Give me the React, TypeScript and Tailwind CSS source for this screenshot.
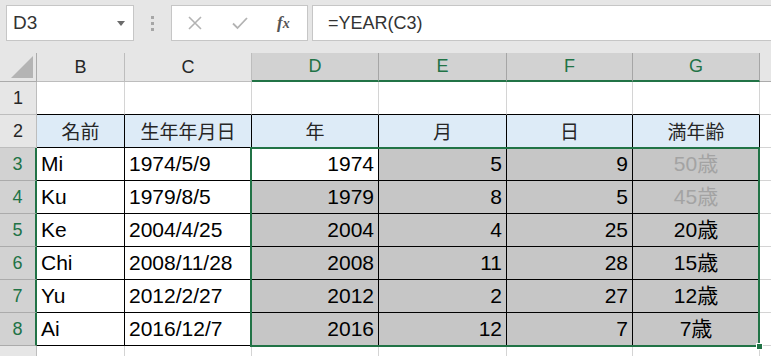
import React from 'react'

const FONT = { fontFamily: '"Liberation Sans", "Noto Sans CJK JP", sans-serif' }
const JP = { fontFamily: '"Noto Sans CJK JP", "Liberation Sans", sans-serif' }

const HEADERS = ['名前', '生年年月日', '年', '月', '日', '満年齢']

const ROWS = [
  { n: 3, name: 'Mi', date: '1974/5/9', y: '1974', m: '5', d: '9', age: '50歳', dim: true },
  { n: 4, name: 'Ku', date: '1979/8/5', y: '1979', m: '8', d: '5', age: '45歳', dim: true },
  { n: 5, name: 'Ke', date: '2004/4/25', y: '2004', m: '4', d: '25', age: '20歳' },
  { n: 6, name: 'Chi', date: '2008/11/28', y: '2008', m: '11', d: '28', age: '15歳' },
  { n: 7, name: 'Yu', date: '2012/2/27', y: '2012', m: '2', d: '27', age: '12歳' },
  { n: 8, name: 'Ai', date: '2016/12/7', y: '2016', m: '12', d: '7', age: '7歳' },
]

function TopBar() {
  return (
    <div className="h-[53px] bg-[#e6e6e6] flex items-start pt-[5px] pl-[6px]">
      {/* Name box */}
      <div className="w-[128px] h-[36px] bg-white border border-[#c6c6c6] flex items-center justify-between pl-[6px] pr-[8px]">
        <span className="text-[19px] text-[#333]">D3</span>
        <svg width="8" height="5" viewBox="0 0 8 5">
          <path d="M0 0h8L4 5z" fill="#6b6b6b" />
        </svg>
      </div>
      {/* Grip dots */}
      <div className="w-[37px] h-[36px] flex flex-col items-center justify-center gap-[3px]">
        <span className="w-[3px] h-[3px] bg-[#a6a6a6]" />
        <span className="w-[3px] h-[3px] bg-[#a6a6a6]" />
        <span className="w-[3px] h-[3px] bg-[#a6a6a6]" />
      </div>
      {/* Cancel / Enter / fx */}
      <div className="w-[137px] h-[36px] bg-white border border-[#c6c6c6] flex items-center">
        <svg className="ml-[16px]" width="14" height="14" viewBox="0 0 14 14">
          <path d="M1 1l12 12M13 1L1 13" stroke="#b3b3b3" strokeWidth="1.6" />
        </svg>
        <svg className="ml-[30px]" width="16" height="14" viewBox="0 0 16 14">
          <path d="M1 7.5l4.5 4.5L15 2" stroke="#b3b3b3" strokeWidth="1.8" fill="none" />
        </svg>
        <span
          className="ml-[29px] text-[17px] italic font-bold text-[#555]"
          style={{ fontFamily: '"Liberation Serif", serif' }}
        >
          f<span className="text-[14px]">x</span>
        </span>
      </div>
      {/* Formula input */}
      <div className="ml-[4px] flex-1 h-[36px] bg-white border border-[#c6c6c6] border-r-0 flex items-center pl-[15px]">
        <span className="text-[18px] text-[#333]">=YEAR(C3)</span>
      </div>
    </div>
  )
}

export default function App() {
  const cell = 'flex items-center border-r border-b border-black'
  return (
    <div className="w-[771px] h-[356px] overflow-hidden bg-white text-black" style={FONT}>
      <TopBar />

      <div className="relative grid grid-cols-[37px_88px_127px_127px_128px_126px_127px_1fr] grid-rows-[29px_repeat(8,33px)_1fr] h-[303px]">
        {/* Column headers */}
        <div className="bg-[#e6e6e6] border-r border-b border-[#ababab] flex items-end justify-end pr-[3px] pb-[3px]">
          <svg width="22" height="22" viewBox="0 0 22 22">
            <path d="M22 0V22H0z" fill="#b4b4b4" />
          </svg>
        </div>
        {['B', 'C'].map(c => (
          <div key={c} className="bg-[#e6e6e6] border-r border-b border-[#bdbdbd] flex items-center justify-center text-[18px] text-[#262626]">
            {c}
          </div>
        ))}
        {['D', 'E', 'F', 'G'].map(c => (
          <div key={c} className="bg-[#d2d2d2] border-r border-r-[#a6a6a6] border-b-2 border-b-[#217346] flex items-center justify-center text-[18px] text-[#217346]">
            {c}
          </div>
        ))}
        <div className="bg-[#e6e6e6] border-b border-[#ababab]" />

        {/* Row 1 */}
        <div className="bg-[#e6e6e6] border-r border-b border-[#bdbdbd] flex items-center justify-center text-[18px] text-[#262626]">1</div>
        {[0, 1, 2, 3, 4, 5].map(i => (
          <div key={i} className="border-r border-r-[#d4d4d4] border-b border-b-black" />
        ))}
        <div className="border-b border-[#d4d4d4]" />

        {/* Row 2 */}
        <div className="bg-[#e6e6e6] border-r border-b border-[#bdbdbd] flex items-center justify-center text-[18px] text-[#262626]">2</div>
        {HEADERS.map(h => (
          <div key={h} className={`${cell} justify-center bg-[#ddebf7] text-[19px] text-[#262626]`} style={JP}>
            {h}
          </div>
        ))}
        <div className="border-b border-[#d4d4d4]" />

        {/* Rows 3-8 */}
        {ROWS.map((r, i) => (
          <React.Fragment key={r.n}>
            <div className="bg-[#d2d2d2] border-r-2 border-r-[#217346] border-b border-b-[#ababab] flex items-center justify-center text-[18px] text-[#217346]">
              {r.n}
            </div>
            <div className={`${cell} pl-[4px] text-[21px]`}>{r.name}</div>
            <div className={`${cell} pl-[4px] text-[21px]`}>{r.date}</div>
            <div className={`${cell} justify-end pr-[4px] text-[21px] ${i === 0 ? 'bg-white' : 'bg-[#c6c6c6]'}`}>{r.y}</div>
            <div className={`${cell} justify-end pr-[4px] text-[21px] bg-[#c6c6c6]`}>{r.m}</div>
            <div className={`${cell} justify-end pr-[4px] text-[21px] bg-[#c6c6c6]`}>{r.d}</div>
            <div className={`${cell} justify-center text-[21px] bg-[#c6c6c6] ${r.dim ? 'text-[#a3a3a3]' : ''}`}>{r.age}</div>
            <div className="border-b border-[#d4d4d4]" />
          </React.Fragment>
        ))}

        {/* Partial row 9 */}
        <div className="bg-[#e6e6e6] border-r border-[#bdbdbd]" />
        {[0, 1, 2, 3, 4, 5].map(i => (
          <div key={i} className="border-r border-[#d4d4d4]" />
        ))}
        <div />

        {/* Selection D3:G8 */}
        <div className="absolute left-[250px] top-[94px] w-[510px] h-[200px] border-2 border-[#217346] pointer-events-none" />
        <div className="absolute left-[756px] top-[290px] w-[7px] h-[7px] bg-[#217346] border border-white" />
      </div>
    </div>
  )
}
